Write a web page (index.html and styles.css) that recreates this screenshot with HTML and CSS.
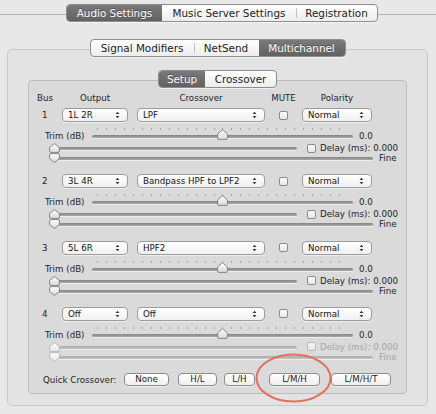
FILE: index.html
```html
<!DOCTYPE html>
<html lang="en">
<head>
<meta charset="utf-8">
<title>Multichannel</title>
<link rel="stylesheet" href="styles.css">
</head>
<body>
<svg class="defs" width="0" height="0" aria-hidden="true">
  <defs>
    <linearGradient id="thumbFill" x1="0" y1="0" x2="0" y2="1">
      <stop offset="0" stop-color="#ffffff"/>
      <stop offset="1" stop-color="#d9d9d9"/>
    </linearGradient>
    <linearGradient id="thumbFillDis" x1="0" y1="0" x2="0" y2="1">
      <stop offset="0" stop-color="#fbfbfb"/>
      <stop offset="1" stop-color="#e9e9e9"/>
    </linearGradient>
  </defs>
</svg>

<div class="topbar">
  <div class="rule rule-l"></div>
  <div class="seg">
    <div class="s on w-audio">Audio Settings</div>
    <div class="s w-music">Music Server Settings</div>
    <div class="s sep w-reg">Registration</div>
  </div>
  <div class="rule rule-r"></div>
</div>

<div class="group">
  <div class="seg seg-over">
    <div class="s w-sig">Signal Modifiers</div>
    <div class="s sep w-net">NetSend</div>
    <div class="s on w-multi">Multichannel</div>
  </div>

  <div class="inner">
    <div class="seg seg-over">
      <div class="s on w-setup">Setup</div>
      <div class="s w-cross">Crossover</div>
    </div>

    <div class="grid head">
      <div class="h-bus">Bus</div>
      <div class="h-c">Output</div>
      <div class="h-c col4">Crossover</div>
      <div class="h-c">MUTE</div>
      <div class="h-c">Polarity</div>
    </div>

    <!-- Bus 1 -->
    <div class="bus">
      <div class="grid sel">
        <div class="num">1</div>
        <div class="popup">1L 2R<svg class="arr" width="5" height="8" viewBox="0 0 5 8"><path d="M0.6 3.1 L2.5 0.8 L4.4 3.1Z M0.6 4.9 L2.5 7.2 L4.4 4.9Z"/></svg></div>
        <div class="popup col4">LPF<svg class="arr" width="5" height="8" viewBox="0 0 5 8"><path d="M0.6 3.1 L2.5 0.8 L4.4 3.1Z M0.6 4.9 L2.5 7.2 L4.4 4.9Z"/></svg></div>
        <div class="cbcell"><span class="cb"></span></div>
        <div class="popup">Normal<svg class="arr" width="5" height="8" viewBox="0 0 5 8"><path d="M0.6 3.1 L2.5 0.8 L4.4 3.1Z M0.6 4.9 L2.5 7.2 L4.4 4.9Z"/></svg></div>
      </div>
      <div class="trimrow">
        <span class="trimlabel">Trim (dB)</span>
        <div class="slider trim">
          <div class="ticks"></div>
          <div class="track"></div>
          <svg class="thumb mid" width="11" height="11" viewBox="0 0 11 11"><path d="M5.5 0.6 L10.4 5 V9 Q10.4 10.4 9 10.4 H2 Q0.6 10.4 0.6 9 V5 Z"/></svg>
        </div>
        <span class="val">0.0</span>
      </div>
      <div class="delayrow">
        <div class="slider dslider">
          <div class="track"></div>
          <svg class="thumb lo" width="11" height="10" viewBox="0 0 11 10"><path d="M5.5 0.6 L10.4 4.4 V8 Q10.4 9.4 9 9.4 H2 Q0.6 9.4 0.6 8 V4.4 Z"/></svg>
        </div>
        <span class="cb"></span>
        <span class="dlabel">Delay (ms): 0.000</span>
      </div>
      <div class="finerow">
        <div class="slider fslider">
          <div class="track"></div>
          <svg class="thumb lo" width="11" height="10" viewBox="0 0 11 10"><path d="M5.5 9.4 L10.4 5.6 V2 Q10.4 0.6 9 0.6 H2 Q0.6 0.6 0.6 2 V5.6 Z"/></svg>
        </div>
        <span class="fine">Fine</span>
      </div>
    </div>

    <!-- Bus 2 -->
    <div class="bus">
      <div class="grid sel">
        <div class="num">2</div>
        <div class="popup">3L 4R<svg class="arr" width="5" height="8" viewBox="0 0 5 8"><path d="M0.6 3.1 L2.5 0.8 L4.4 3.1Z M0.6 4.9 L2.5 7.2 L4.4 4.9Z"/></svg></div>
        <div class="popup col4">Bandpass HPF to LPF2<svg class="arr" width="5" height="8" viewBox="0 0 5 8"><path d="M0.6 3.1 L2.5 0.8 L4.4 3.1Z M0.6 4.9 L2.5 7.2 L4.4 4.9Z"/></svg></div>
        <div class="cbcell"><span class="cb"></span></div>
        <div class="popup">Normal<svg class="arr" width="5" height="8" viewBox="0 0 5 8"><path d="M0.6 3.1 L2.5 0.8 L4.4 3.1Z M0.6 4.9 L2.5 7.2 L4.4 4.9Z"/></svg></div>
      </div>
      <div class="trimrow">
        <span class="trimlabel">Trim (dB)</span>
        <div class="slider trim">
          <div class="ticks"></div>
          <div class="track"></div>
          <svg class="thumb mid" width="11" height="11" viewBox="0 0 11 11"><path d="M5.5 0.6 L10.4 5 V9 Q10.4 10.4 9 10.4 H2 Q0.6 10.4 0.6 9 V5 Z"/></svg>
        </div>
        <span class="val">0.0</span>
      </div>
      <div class="delayrow">
        <div class="slider dslider">
          <div class="track"></div>
          <svg class="thumb lo" width="11" height="10" viewBox="0 0 11 10"><path d="M5.5 0.6 L10.4 4.4 V8 Q10.4 9.4 9 9.4 H2 Q0.6 9.4 0.6 8 V4.4 Z"/></svg>
        </div>
        <span class="cb"></span>
        <span class="dlabel">Delay (ms): 0.000</span>
      </div>
      <div class="finerow">
        <div class="slider fslider">
          <div class="track"></div>
          <svg class="thumb lo" width="11" height="10" viewBox="0 0 11 10"><path d="M5.5 9.4 L10.4 5.6 V2 Q10.4 0.6 9 0.6 H2 Q0.6 0.6 0.6 2 V5.6 Z"/></svg>
        </div>
        <span class="fine">Fine</span>
      </div>
    </div>

    <!-- Bus 3 -->
    <div class="bus">
      <div class="grid sel">
        <div class="num">3</div>
        <div class="popup">5L 6R<svg class="arr" width="5" height="8" viewBox="0 0 5 8"><path d="M0.6 3.1 L2.5 0.8 L4.4 3.1Z M0.6 4.9 L2.5 7.2 L4.4 4.9Z"/></svg></div>
        <div class="popup col4">HPF2<svg class="arr" width="5" height="8" viewBox="0 0 5 8"><path d="M0.6 3.1 L2.5 0.8 L4.4 3.1Z M0.6 4.9 L2.5 7.2 L4.4 4.9Z"/></svg></div>
        <div class="cbcell"><span class="cb"></span></div>
        <div class="popup">Normal<svg class="arr" width="5" height="8" viewBox="0 0 5 8"><path d="M0.6 3.1 L2.5 0.8 L4.4 3.1Z M0.6 4.9 L2.5 7.2 L4.4 4.9Z"/></svg></div>
      </div>
      <div class="trimrow">
        <span class="trimlabel">Trim (dB)</span>
        <div class="slider trim">
          <div class="ticks"></div>
          <div class="track"></div>
          <svg class="thumb mid" width="11" height="11" viewBox="0 0 11 11"><path d="M5.5 0.6 L10.4 5 V9 Q10.4 10.4 9 10.4 H2 Q0.6 10.4 0.6 9 V5 Z"/></svg>
        </div>
        <span class="val">0.0</span>
      </div>
      <div class="delayrow">
        <div class="slider dslider">
          <div class="track"></div>
          <svg class="thumb lo" width="11" height="10" viewBox="0 0 11 10"><path d="M5.5 0.6 L10.4 4.4 V8 Q10.4 9.4 9 9.4 H2 Q0.6 9.4 0.6 8 V4.4 Z"/></svg>
        </div>
        <span class="cb"></span>
        <span class="dlabel">Delay (ms): 0.000</span>
      </div>
      <div class="finerow">
        <div class="slider fslider">
          <div class="track"></div>
          <svg class="thumb lo" width="11" height="10" viewBox="0 0 11 10"><path d="M5.5 9.4 L10.4 5.6 V2 Q10.4 0.6 9 0.6 H2 Q0.6 0.6 0.6 2 V5.6 Z"/></svg>
        </div>
        <span class="fine">Fine</span>
      </div>
    </div>

    <!-- Bus 4 -->
    <div class="bus">
      <div class="grid sel">
        <div class="num">4</div>
        <div class="popup">Off<svg class="arr" width="5" height="8" viewBox="0 0 5 8"><path d="M0.6 3.1 L2.5 0.8 L4.4 3.1Z M0.6 4.9 L2.5 7.2 L4.4 4.9Z"/></svg></div>
        <div class="popup col4">Off<svg class="arr" width="5" height="8" viewBox="0 0 5 8"><path d="M0.6 3.1 L2.5 0.8 L4.4 3.1Z M0.6 4.9 L2.5 7.2 L4.4 4.9Z"/></svg></div>
        <div class="cbcell"><span class="cb"></span></div>
        <div class="popup">Normal<svg class="arr" width="5" height="8" viewBox="0 0 5 8"><path d="M0.6 3.1 L2.5 0.8 L4.4 3.1Z M0.6 4.9 L2.5 7.2 L4.4 4.9Z"/></svg></div>
      </div>
      <div class="trimrow">
        <span class="trimlabel">Trim (dB)</span>
        <div class="slider trim">
          <div class="ticks"></div>
          <div class="track"></div>
          <svg class="thumb mid" width="11" height="11" viewBox="0 0 11 11"><path d="M5.5 0.6 L10.4 5 V9 Q10.4 10.4 9 10.4 H2 Q0.6 10.4 0.6 9 V5 Z"/></svg>
        </div>
        <span class="val">0.0</span>
      </div>
      <div class="delayrow dis">
        <div class="slider dslider">
          <div class="track"></div>
          <svg class="thumb lo" width="11" height="10" viewBox="0 0 11 10"><path d="M5.5 0.6 L10.4 4.4 V8 Q10.4 9.4 9 9.4 H2 Q0.6 9.4 0.6 8 V4.4 Z"/></svg>
        </div>
        <span class="cb"></span>
        <span class="dlabel">Delay (ms): 0.000</span>
      </div>
      <div class="finerow dis">
        <div class="slider fslider">
          <div class="track"></div>
          <svg class="thumb lo" width="11" height="10" viewBox="0 0 11 10"><path d="M5.5 9.4 L10.4 5.6 V2 Q10.4 0.6 9 0.6 H2 Q0.6 0.6 0.6 2 V5.6 Z"/></svg>
        </div>
        <span class="fine">Fine</span>
      </div>
    </div>

    <div class="quick">
      <span class="qlabel">Quick Crossover:</span>
      <div class="btn b-none">None</div>
      <div class="btn b-hl">H/L</div>
      <div class="btn b-lh">L/H</div>
      <div class="hl">
        <div class="btn b-lmh">L/M/H</div>
        <svg class="ring" width="78" height="50" viewBox="0 0 78 50"><ellipse cx="38.5" cy="25" rx="37" ry="23.5"/></svg>
      </div>
      <div class="btn b-lmht">L/M/H/T</div>
    </div>
  </div>
</div>
</body>
</html>
```

FILE: styles.css
```css
* { box-sizing: border-box; }

html, body {
  margin: 0;
  padding: 0;
}

body {
  width: 436px;
  height: 414px;
  overflow: hidden;
  background: #e8e8e8;
  font-family: "DejaVu Sans", "Noto Sans", sans-serif;
  font-size: 8.7px;
  color: #1e1e1e;
}

.defs {
  position: absolute;
  width: 0;
  height: 0;
}

/* ---------- segmented controls ---------- */
.topbar {
  display: flex;
  align-items: center;
  margin-top: 4px;
  height: 18px;
}

.rule {
  height: 1px;
  margin-top: 2px;
  background: #b1b1b1;
}
.rule-l { width: 66px; }
.rule-r { flex: 1; }

.seg {
  display: flex;
  height: 18px;
  border: 1px solid #8d8d8d;
  border-radius: 4px;
  overflow: hidden;
  background: linear-gradient(#ffffff, #ededed);
  box-shadow: 0 1px 0 rgba(255, 255, 255, 0.6);
  font-size: 10.4px;
  line-height: 16px;
  color: #222;
  position: relative;
  z-index: 1;
}

.s {
  display: flex;
  align-items: center;
  justify-content: center;
  white-space: nowrap;
}

.s.sep {
  background: linear-gradient(#c2c2c2, #c2c2c2) left center / 1px 10px no-repeat;
}

.s.on {
  background: linear-gradient(#7a7a7a, #626262);
  color: #ffffff;
  text-shadow: 0 -1px 0 rgba(0, 0, 0, 0.35);
}

.w-audio { width: 95px; }
.w-music { width: 134px; }
.w-reg { width: 81px; }
.w-sig { width: 103px; }
.w-net { width: 65px; }
.w-multi { width: 86px; }
.w-setup { width: 46px; }
.w-cross { width: 71px; }

.seg-over { margin-top: -11px; }

/* ---------- group boxes ---------- */
.group {
  margin: 27px 8px 0 7px;
  height: 357px;
  border: 1px solid #c8c8c8;
  border-radius: 5px;
  background: #e3e3e3;
  display: flex;
  flex-direction: column;
  align-items: center;
}

.inner {
  margin-top: 23px;
  width: 379px;
  height: 314px;
  border: 1px solid #bdbdbd;
  border-radius: 4px;
  background: #dadada;
  display: flex;
  flex-direction: column;
  align-items: center;
}

.inner > .grid,
.inner > .bus,
.inner > .quick {
  align-self: stretch;
  padding-left: 8px;
}

/* ---------- grid rows ---------- */
.grid {
  display: grid;
  grid-template-columns: 25px 66px 9px 128px 37px 70px;
  align-items: center;
}

.col4 { grid-column: 4; }

.head {
  margin-top: 4px;
  line-height: 12px;
  height: 12px;
}

.h-c { text-align: center; }

.bus {
  height: 66.33px;
}
.head + .bus { margin-top: 4px; }

.sel { height: 14px; }

.num { padding-left: 5px; }

.popup {
  display: flex;
  align-items: center;
  height: 14px;
  padding-left: 5px;
  border: 1px solid #9c9c9c;
  border-radius: 4px;
  background: linear-gradient(#ffffff, #f0f0f0);
  box-shadow: 0 1px 0 rgba(255, 255, 255, 0.5);
  color: #141414;
  white-space: nowrap;
  overflow: hidden;
}

.arr {
  margin-left: auto;
  margin-right: 7px;
  flex: none;
  fill: #333;
}

.cbcell {
  display: flex;
  justify-content: center;
}

.cb {
  display: block;
  flex: none;
  width: 9px;
  height: 9px;
  border: 1px solid #8b8b8b;
  border-radius: 2px;
  background: linear-gradient(#fdfdfd, #e6e6e6);
}

/* ---------- sliders ---------- */
.slider {
  position: relative;
  flex: none;
}

.track {
  height: 3px;
  border-radius: 2px;
  background: linear-gradient(#848484, #a9a9a9);
  box-shadow: 0 1px 0 rgba(255, 255, 255, 0.55);
}

.thumb {
  position: absolute;
}
.thumb path {
  fill: url(#thumbFill);
  stroke: #7b7b7b;
  stroke-width: 0.9;
}

.trimrow {
  display: flex;
  height: 14px;
  margin-top: 5px;
}

.trimlabel {
  margin-left: 8px;
  width: 47px;
  padding-top: 3px;
  line-height: 12px;
  white-space: nowrap;
}

.trim {
  width: 261px;
  height: 14px;
}

.ticks {
  margin: 1px 5px 0;
  height: 2px;
  background: repeating-linear-gradient(90deg, #a2a2a2 0 1px, transparent 1px 8.964px);
}

.trim .track { margin-top: 5px; }

.thumb.mid {
  left: calc(50% - 5.5px);
  top: 2px;
}

.val {
  margin-left: 6px;
  padding-top: 3px;
  line-height: 12px;
}

.delayrow,
.finerow {
  display: flex;
  align-items: center;
  height: 10px;
}

.delayrow { margin-top: 2px; }

.dslider,
.fslider {
  height: 10px;
  margin-left: 12px;
}
.dslider { width: 248px; }
.fslider { width: 324px; }

.dslider .track,
.fslider .track {
  margin: 4px 0 0 4px;
}

.thumb.lo {
  left: 0;
  top: 0;
}

.delayrow .cb { margin-left: 10px; }

.dlabel {
  margin-left: 4px;
  white-space: nowrap;
  line-height: 10px;
}

.fine {
  margin-left: 6px;
  line-height: 10px;
}

/* disabled row */
.dis .track { background: linear-gradient(#acacac, #c3c3c3); }
.dis .thumb path { fill: url(#thumbFillDis); stroke: #b4b4b4; }
.dis .cb { border-color: #bbbbbb; background: linear-gradient(#f4f4f4, #e6e6e6); }
.dis .dlabel,
.dis .fine { color: #a4a4a4; }

/* ---------- quick crossover ---------- */
.quick {
  display: flex;
  align-items: center;
  height: 13px;
}

.qlabel {
  margin-left: 6px;
  width: 74px;
  white-space: nowrap;
}

.btn {
  height: 13px;
  border: 1px solid #8c8c8c;
  border-radius: 4px;
  background: linear-gradient(#ffffff, #efefef);
  box-shadow: 0 1px 0 rgba(255, 255, 255, 0.5);
  display: flex;
  align-items: center;
  justify-content: center;
  line-height: 11px;
  color: #1a1a1a;
}

.b-none { width: 45px; margin-left: 7px; }
.b-hl { width: 39px; margin-left: 9px; }
.b-lh { width: 31px; margin-left: 7px; }
.hl { position: relative; margin-left: 14px; }
.b-lmh { width: 51px; }
.b-lmht { width: 60px; margin-left: 11px; }

.ring {
  position: absolute;
  left: -14px;
  top: -20px;
  overflow: visible;
  pointer-events: none;
}
.ring ellipse {
  fill: none;
  stroke: #e3705f;
  stroke-width: 2;
}
```
